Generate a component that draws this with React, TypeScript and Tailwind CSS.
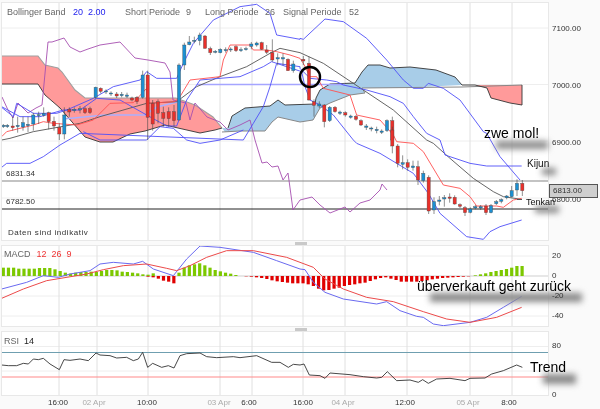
import React from "react";

type Candle = [number, number, number, number, number, "r" | "b"];

const UP = "#1b8fd2";
const DOWN = "#e8302b";

const font = "font-['Liberation_Sans',Arial,sans-serif]";

// all chart points were read off a 3x crop, so pts() scales them back
const pts = (raw: string, ox = 0, oy = 0) =>
  raw
    .trim()
    .split(/\s+/)
    .map((p) => {
      const [x, y] = p.split(",").map(Number);
      return `${x / 3 + ox},${y / 3 + oy}`;
    })
    .join(" ");

const grid = [59, 97, 148, 220, 252, 303, 345, 407, 470, 512];

const candlesLeft: Candle[] = [
  [10, 376, 380, 372, 384, "b"], [22, 376, 380, 372, 384, "b"], [38, 378, 383, 350, 392, "r"], [53, 376, 380, 350, 398, "b"],
  [69, 368, 381, 350, 392, "b"], [84, 373, 377, 350, 396, "b"], [100, 345, 372, 338, 392, "b"], [116, 344, 347, 335, 372, "b"],
  [131, 340, 346, 322, 350, "b"], [146, 338, 365, 335, 388, "r"], [162, 364, 378, 350, 392, "r"], [178, 382, 402, 370, 420, "r"],
  [193, 345, 402, 322, 418, "b"], [208, 328, 336, 322, 350, "r"], [223, 328, 332, 322, 338, "b"], [240, 326, 330, 318, 340, "b"],
  [255, 326, 338, 320, 342, "r"], [270, 326, 338, 320, 342, "r"], [287, 262, 292, 260, 296, "b"], [302, 265, 274, 262, 280, "r"],
  [318, 273, 276, 268, 282, "b"], [333, 279, 281, 274, 288, "b"], [350, 282, 288, 276, 294, "r"], [365, 283, 287, 276, 292, "b"],
  [381, 285, 289, 278, 294, "b"], [396, 294, 300, 290, 304, "r"], [411, 292, 305, 288, 312, "r"], [428, 225, 292, 212, 296, "b"],
  [443, 225, 352, 212, 420, "r"], [458, 310, 372, 300, 392, "r"], [474, 305, 340, 298, 370, "r"], [490, 338, 355, 320, 380, "r"],
  [506, 335, 356, 322, 380, "r"], [522, 335, 362, 315, 380, "r"], [537, 195, 360, 190, 362, "b"], [553, 135, 195, 128, 210, "b"],
  [568, 126, 134, 108, 136, "b"], [583, 121, 124, 110, 130, "b"], [599, 105, 122, 98, 136, "b"], [615, 108, 145, 105, 146, "r"],
  [631, 146, 158, 140, 165, "r"], [646, 154, 157, 150, 160, "b"], [661, 148, 158, 145, 160, "b"], [677, 149, 152, 142, 158, "b"],
  [692, 147, 150, 142, 156, "b"], [708, 140, 152, 136, 156, "r"], [723, 149, 152, 142, 156, "b"], [738, 146, 149, 140, 152, "b"],
  [754, 132, 139, 126, 148, "b"], [770, 129, 135, 125, 140, "b"], [785, 128, 148, 125, 150, "r"], [800, 150, 157, 135, 162, "r"],
  [817, 158, 180, 118, 185, "r"], [833, 173, 177, 160, 196, "b"], [849, 173, 177, 160, 196, "b"], [864, 178, 212, 175, 212, "r"],
  [880, 192, 212, 182, 218, "b"],
];

const candlesMid: Candle[] = [
  [10, 178, 183, 168, 195, "r"], [27, 190, 300, 170, 302, "r"], [42, 305, 316, 298, 350, "r"], [58, 312, 318, 304, 324, "b"],
  [73, 315, 365, 312, 382, "r"], [89, 322, 362, 318, 366, "b"], [105, 322, 335, 318, 338, "r"], [120, 336, 340, 332, 345, "b"],
  [136, 338, 345, 334, 350, "r"], [152, 348, 352, 344, 356, "b"], [168, 349, 358, 345, 362, "r"], [183, 362, 375, 358, 378, "r"],
  [199, 378, 382, 372, 390, "b"], [214, 384, 387, 380, 394, "b"], [230, 388, 392, 380, 400, "b"], [245, 393, 397, 388, 402, "b"],
  [261, 362, 392, 358, 396, "b"], [277, 362, 420, 350, 420, "r"],
];

const candlesRight: Candle[] = [
  [277, 0, 48, -10, 70, "r"], [293, 48, 100, 42, 112, "r"], [308, 98, 103, 76, 118, "b"], [323, 98, 112, 88, 122, "r"],
  [339, 108, 113, 92, 122, "b"], [354, 110, 150, 92, 165, "r"], [370, 130, 152, 122, 158, "b"], [386, 142, 243, 136, 252, "r"],
  [402, 215, 240, 202, 252, "b"], [418, 210, 214, 198, 226, "b"], [433, 203, 207, 195, 230, "b"], [449, 201, 205, 190, 218, "r"],
  [464, 202, 222, 196, 224, "r"], [480, 224, 229, 220, 234, "r"], [495, 233, 248, 228, 258, "r"], [511, 237, 247, 232, 250, "b"],
  [526, 230, 234, 225, 238, "b"], [542, 230, 234, 225, 240, "b"], [558, 228, 248, 222, 255, "r"], [573, 227, 248, 222, 250, "b"],
  [589, 215, 221, 210, 225, "b"], [604, 209, 214, 205, 220, "b"], [620, 198, 203, 195, 208, "b"], [635, 182, 200, 168, 202, "b"],
  [651, 160, 180, 148, 198, "b"], [667, 160, 182, 150, 198, "r"],
];

const green1 = [25, 25, 25, 22, 22, 22, 22, 24, 24, 24, 20, 15, 10, 7, 10, 12, 12, 13, 12, 15, 18, 18, 17, 13, 12, 10, 8, 5, 4, 8];
const red1 = [2, 4, 8, 14, 17, 22];
const green2 = [10, 25, 32, 35, 38, 32, 25, 18, 14, 10, 7, 3];
const red2 = [0, 1, 2, 4, 6, 9, 13, 16, 18, 20, 22, 22, 22, 25, 30, 38, 43, 42, 38, 35, 30, 27, 25, 22, 20, 15, 10, 6, 4, 8, 12, 17, 17, 17, 17, 15, 13, 10, 8, 6, 5, 4, 3, 2, 1];
const green3 = [2, 5, 8, 12, 15, 18, 21, 25, 30, 30];

function Candles({ data, ox, oy }: { data: Candle[]; ox: number; oy: number }) {
  return (
    <g>
      {data.map(([x, top, bot, wt, wb, c], i) => {
        const cx = x / 3 + ox;
        return (
          <g key={i}>
            <line x1={cx} x2={cx} y1={wt / 3 + oy} y2={wb / 3 + oy} stroke="#444" strokeWidth="0.6" />
            <rect
              x={cx - 1.6}
              y={top / 3 + oy}
              width="3.2"
              height={Math.max((bot - top) / 3, 1)}
              fill={c === "r" ? DOWN : UP}
              stroke="#444"
              strokeWidth="0.35"
            />
          </g>
        );
      })}
    </g>
  );
}

function GridLines({ y1, y2 }: { y1: number; y2: number }) {
  return (
    <g stroke="#e0e0e0" strokeWidth="1">
      {grid.map((x) => (
        <line key={x} x1={x} x2={x} y1={y1} y2={y2} />
      ))}
    </g>
  );
}

function MainChart() {
  const bbUpper = pts("5,322 40,350 50,310 100,340 170,340 200,330 280,295 340,260 420,240 440,215 470,235 530,235 550,190 580,130 640,60 720,20 770,13 810,40 830,105 900,118") + " " +
    pts("0,115 10,118 75,57 130,65 200,115 260,180 310,240 340,265 370,265 385,250 430,265 480,300 550,395", 300) + " " +
    pts("560,10 600,80 660,150", 300, 130);
  const bbMid = pts("5,320 60,350 120,350 190,330 240,330 290,295 360,300 440,345 500,378 530,378 560,300 600,240 660,235 720,230 790,200 815,185 830,190 900,200") + " " +
    pts("0,205 30,235 80,240 110,245 130,255 200,270 270,290 310,310 340,350 380,400", 300) + " " +
    pts("420,30 435,75 510,100 560,108 665,108", 300, 130);
  const bbLow = pts("5,112 20,100 90,100 130,80 180,45 240,10", 0, 130) + " " +
    pts("730,420 760,370 790,320 810,260 830,190", 0, 0) + " " +
    pts("5,215 15,260 30,300 60,315 100,345 160,420", 300, 0) + " " +
    pts("170,40 240,70 290,100 340,130 385,190 420,250 500,320 550,328 570,305 600,290 665,270", 300, 130);
  const bbLower2 = pts("250,395 300,420 440,420 480,380 520,385 560,420", 0, 0) + " " + pts("600,40 660,30 730,0", 0, 130);
  const kijun = pts("5,420 30,415 100,395 240,370 300,350 440,310 530,305 590,260 660,230 740,200 810,160 840,145 900,158") + " " +
    pts("0,158 70,190 160,250 280,330 380,420", 300) + " " +
    pts("400,40 450,85 520,145 580,185 610,200 665,208", 300, 130);
  const tenkan = pts("5,410 20,395 60,385 100,375 130,365 160,370 230,375 280,360 330,310 400,308 440,265 440,310 525,305 540,290 570,240 660,230 670,180 690,135 750,135 760,150 800,150 830,155 870,165 900,175") + " " +
    pts("10,190 30,230 50,230 70,265 150,285 170,345 240,360 280,405", 300) + " " +
    pts("290,35 340,40 370,65 430,165 480,175 510,200 530,228 590,228 610,232 640,210 665,205", 300, 130);
  const chikou = "2,97 8,110 13,118 18,103 28,113 36,108 42,105 48,42 52,42 64,38 70,47 80,52 88,49 100,45 120,42 135,58 148,60 165,63 170,72 173,100 186,103 190,120 195,103 207,117 220,122 228,130 240,125 250,120 255,140 262,163 267,162 272,167 278,166 283,180 288,173 293,210 300,200 312,197 320,205 330,213 345,207 350,212 360,203 370,200 380,190 382,184 387,190";

  return (
    <svg viewBox="2 3 546 237" className="block h-[237px] w-[546px]">
      <g stroke="#eeeeee" strokeWidth="1">
        <line x1="2" x2="548" y1="28" y2="28" />
        <line x1="2" x2="548" y1="84.5" y2="84.5" />
        <line x1="2" x2="548" y1="141" y2="141" />
        <line x1="2" x2="548" y1="198" y2="198" />
      </g>
      <GridLines y1={3} y2={240} />

      {/* cloud */}
      <polygon
        fill="#ff9a9a"
        points="2,56 38,56 45,65 58,68 62,72 75,90 85,98 176,98 195,105 213,117 222,128 215,130 200,133 178,128 165,125 145,131 130,134 113,142 100,142 85,137 60,108 45,95 38,84 2,84"
      />
      <polygon
        fill="#a8cde8"
        points="222,128 228,128 232,116 245,108 270,106 278,100 285,105 315,104 316,98 320,90 330,84 355,83 362,72 368,65 380,65 390,68 410,67 436,70 455,77 462,85 400,88 362,88 365,93 350,95 330,103 320,108 313,120 300,122 278,117 272,122 265,131 240,131 225,132"
      />
      <polygon fill="#ff9a9a" points="462,85 522,85 522,105 510,103 491,98 487,88 475,85" />
      <polyline fill="none" stroke="#a0a0a0" strokeWidth="1.1" points="2,56 38,56 45,65 58,68 62,72 75,90 85,98 176,98 195,105 213,117 222,128" />
      <polyline fill="none" stroke="#333" strokeWidth="0.9" points="2,84 38,84 45,95 60,108 85,137 100,142 113,142 130,134 145,131 165,125 178,128 200,133 215,130 222,128" />
      <polyline fill="none" stroke="#888" strokeWidth="1" points="222,132 240,131 265,131 272,122 278,117 300,122 313,120 320,108 330,103 350,95 365,93 362,88 462,87 522,85" />
      <polyline fill="none" stroke="#333" strokeWidth="0.9" points="228,128 232,116 245,108 270,106 278,100 285,105 315,104 316,98 320,90 330,84 355,83 362,72 368,65 380,65 390,68 410,67 436,70 455,77 462,85 475,85 487,88 491,98 510,103 522,105 522,85" />

      <polyline fill="none" stroke="#aab0ff" strokeWidth="1.6" points="63,119 105,115 145,115 157,107 177,102" />
      <line x1="197" x2="345" y1="84.5" y2="84.5" stroke="#a5a5ff" strokeWidth="1.4" />

      <line x1="2" x2="548" y1="181" y2="181" stroke="#888" strokeWidth="1.2" />
      <line x1="2" x2="548" y1="209" y2="209" stroke="#222" strokeWidth="1" />

      <polyline fill="none" stroke="#a64fb0" strokeWidth="0.9" points={chikou} />
      <polyline fill="none" stroke="#555" strokeWidth="0.9" points={kijun} />
      <polyline fill="none" stroke="#4f4ff8" strokeWidth="0.9" points={bbUpper} />
      <polyline fill="none" stroke="#4f4ff8" strokeWidth="0.9" points={bbMid} />
      <polyline fill="none" stroke="#4f4ff8" strokeWidth="0.9" points={bbLow} />
      <polyline fill="none" stroke="#4f4ff8" strokeWidth="0.9" points={bbLower2} />
      <polyline fill="none" stroke="#ff5050" strokeWidth="0.9" points={tenkan} />

      <Candles data={candlesLeft} ox={0} oy={0} />
      <Candles data={candlesMid} ox={300} oy={0} />
      <Candles data={candlesRight} ox={300} oy={130} />

      <circle cx="310" cy="77" r="10" fill="none" stroke="#000" strokeWidth="2.4" />
      {/* small stub beside the Tenkan label */}
      <line x1="517" x2="522" y1="199.5" y2="199.5" stroke="#555" strokeWidth="1" />
    </svg>
  );
}

function MacdChart() {
  const bars: { x: number; h: number; c: string }[] = [];
  green1.forEach((h, i) => bars.push({ x: 3.3 + i * 5.17, h: h / 3, c: "#7cc800" }));
  red1.forEach((h, i) => bars.push({ x: 148 + i * 5.17, h: -h / 3, c: "#e00000" }));
  green2.forEach((h, i) => bars.push({ x: 179 + i * 5.17, h: h / 3, c: "#7cc800" }));
  red2.forEach((h, i) => bars.push({ x: 241 + i * 5.17, h: -h / 3, c: "#e00000" }));
  green3.forEach((h, i) => bars.push({ x: 475.3 + i * 5.2, h: h / 3, c: "#7cc800" }));

  const blue = pts("5,90 80,70 130,50 175,55 210,45 270,35 300,15 340,10 400,15 428,7 460,30 520,50 560,0 600,-39 660,-35 760,-20 830,5 900,30", 0, 260) + " " +
    pts("15,32 40,70 75,100 130,120 230,135 260,128 300,155 350,172 370,175 400,195 430,200 510,190 560,175 610,145 665,112", 300, 260);
  const red = pts("5,118 70,90 140,65 260,45 310,32 370,20 440,15 500,28 530,35 570,20 620,-5 680,-25 760,-25 860,-5 900,10", 0, 260) + " " +
    pts("40,25 75,60 130,90 200,115 280,128 370,158 440,180 510,190 590,175 665,145", 300, 260);

  return (
    <svg viewBox="2 247 546 80" className="block h-[80px] w-[546px]">
      <g stroke="#eeeeee" strokeWidth="1">
        <line x1="2" x2="548" y1="257" y2="257" />
        <line x1="2" x2="548" y1="297" y2="297" />
        <line x1="2" x2="548" y1="317" y2="317" />
      </g>
      <GridLines y1={247} y2={327} />
      <line x1="2" x2="548" y1="277" y2="277" stroke="#cfcfcf" strokeWidth="1" />
      {bars.map((b, i) => (
        <rect key={i} x={b.x - 1.6} y={b.h > 0 ? 277 - b.h : 277} width="3.2" height={Math.abs(b.h)} fill={b.c} />
      ))}
      <polyline fill="none" stroke="#6a6af0" strokeWidth="1" points={blue} />
      <polyline fill="none" stroke="#ec4a4a" strokeWidth="1" points={red} />
    </svg>
  );
}

function RsiChart() {
  const rsi = pts("5,318 25,320 50,320 70,313 85,315 100,300 115,302 130,298 150,315 178,332 192,302 210,304 240,300 265,305 288,282 300,288 330,290 350,297 380,295 400,305 415,300 428,280 443,325 458,313 485,325 505,320 522,327 540,290 560,284 600,282 620,293 650,296 700,293 720,296 770,290 815,310 840,310 865,325 880,316 900,318", 0, 260) + " " +
    pts("12,315 28,348 60,350 75,358 90,342 150,347 190,353 230,357 245,355 262,338 290,365 330,363 355,370 368,362 385,373 410,360 450,358 495,365 510,358 555,357 575,345 610,335 650,318 667,325", 300, 260);
  return (
    <svg viewBox="2 333 546 63" className="block h-[63px] w-[546px]">
      <g stroke="#eeeeee" strokeWidth="1">
        <line x1="2" x2="548" y1="347.5" y2="347.5" />
        <line x1="2" x2="548" y1="372" y2="372" />
      </g>
      <GridLines y1={333} y2={396} />
      <line x1="2" x2="548" y1="353.5" y2="353.5" stroke="#6f9fb0" strokeWidth="1" />
      <line x1="2" x2="548" y1="378" y2="378" stroke="#ff8a8a" strokeWidth="1.2" />
      <polyline fill="none" stroke="#333" strokeWidth="0.9" points={rsi} />
    </svg>
  );
}

function Handle() {
  return (
    <div className="flex h-[6px] w-[546px] items-center pl-[293px]">
      <div className="h-[3px] w-[12px] bg-[#c9c9c9]" />
    </div>
  );
}

function Smudge({ className }: { className: string }) {
  return <div className={`absolute bg-[#8a8a8a] blur-[3px] ${className}`} />;
}

export default function App() {
  return (
    <div className={`relative h-[409px] w-[600px] overflow-hidden bg-[#fafafa] ${font} text-[9px] text-[#333] blur-[0.35px]`}>
      <div className="flex flex-col pl-[2px] pt-[3px]">
        <div className="flex">
          <div className="relative bg-white ring-1 ring-[#e8e8e8]">
            <MainChart />
            <div className="absolute left-[5px] top-[4px] flex text-[9px] leading-[11px] text-[#666]">
              <span className="w-[66px]">Bollinger Band</span>
              <span className="w-[15px] text-[#2222ee]">20</span>
              <span className="w-[37px] text-[#2222ee]">2.00</span>
              <span className="w-[61px]">Short Periode</span>
              <span className="w-[19px]">9</span>
              <span className="w-[60px]">Long Periode</span>
              <span className="w-[18px]">26</span>
              <span className="w-[66px]">Signal Periode</span>
              <span>52</span>
            </div>
            <span className="absolute left-[4px] top-[166px] text-[8px] leading-[10px]">6831.34</span>
            <span className="absolute left-[4px] top-[194px] text-[8px] leading-[10px]">6782.50</span>
            <span className="absolute left-[6px] top-[225px] text-[8px] leading-[10px] tracking-[0.55px]">Daten sind indikativ</span>
          </div>
          <div className="relative z-10 flex w-[52px] flex-col gap-[47px] pl-[4px] pt-[21px] text-[8px] leading-[10px]">
            <span>7100.00</span>
            <span>7000.00</span>
            <span>6900.00</span>
            <span>6800.00</span>
            <div className="absolute left-[1px] top-[181px] flex h-[14px] w-[49px] items-center border border-[#555] bg-[#cfcfcf] pl-[3px]">
              6813.00
            </div>
          </div>
        </div>
        <Handle />
        <div className="flex">
          <div className="relative bg-white ring-1 ring-[#e8e8e8]">
            <MacdChart />
            <div className="absolute left-[2px] top-[3px] flex gap-[5px] text-[9px] leading-[11px] text-[#666]">
              <span className="mr-[1px]">MACD</span>
              <span className="text-[#ee3333]">12</span>
              <span className="text-[#ee3333]">26</span>
              <span className="text-[#ee3333]">9</span>
            </div>
          </div>
          <div className="relative z-10 flex h-[80px] w-[52px] flex-col gap-[10px] pl-[4px] pt-[5px] text-[8px] leading-[10px]">
            <span>20</span>
            <span>0</span>
            <span>-20</span>
            <span>-40</span>
          </div>
        </div>
        <Handle />
        <div className="flex">
          <div className="relative bg-white ring-1 ring-[#e8e8e8]">
            <RsiChart />
            <div className="absolute left-[2px] top-[4px] flex gap-[5px] text-[9px] leading-[11px] text-[#666]">
              <span>RSI</span>
              <span className="text-[#222]">14</span>
            </div>
          </div>
          <div className="flex h-[63px] w-[52px] flex-col gap-[39px] pl-[4px] pt-[9px] text-[8px] leading-[10px]">
            <span className="shrink-0">80</span>
            <span className="shrink-0">0</span>
          </div>
        </div>
        <div className="flex h-[12px] w-[546px] pl-[41px] pt-[3px] text-center text-[8px] leading-[10px]">
          <span className="w-[30px]">16:00</span>
          <span className="ml-[6px] w-[30px] text-[#aaa]">02 Apr</span>
          <span className="ml-[23px] w-[30px]">10:00</span>
          <span className="ml-[42px] w-[30px] text-[#aaa]">03 Apr</span>
          <span className="w-[30px]">6:00</span>
          <span className="ml-[24px] w-[30px]">16:00</span>
          <span className="ml-[10px] w-[30px] text-[#aaa]">04 Apr</span>
          <span className="ml-[32px] w-[30px]">12:00</span>
          <span className="ml-[33px] w-[30px] text-[#aaa]">05 Apr</span>
          <span className="ml-[11px] w-[30px]">8:00</span>
        </div>
      </div>

      {/* hand-written annotations on top of the chart, with the smudged-out text behind them */}
      <Smudge className="left-[496px] top-[141px] h-[8px] w-[52px]" />
      <Smudge className="left-[542px] top-[168px] h-[7px] w-[14px]" />
      <Smudge className="left-[535px] top-[206px] h-[7px] w-[24px]" />
      <Smudge className="left-[430px] top-[293px] h-[9px] w-[152px]" />
      <Smudge className="left-[543px] top-[374px] h-[10px] w-[33px]" />
      <span className="absolute left-[484px] top-[125px] z-20 text-[14px] leading-[16px] text-black">zwe mol!</span>
      <span className="absolute left-[527px] top-[158px] z-20 text-[10px] leading-[12px] text-[#111]">Kijun</span>
      <span className="absolute left-[526px] top-[197px] z-20 text-[9px] leading-[11px] text-[#111]">Tenkan</span>
      <span className="absolute left-[417px] top-[278px] z-20 text-[14px] leading-[16px] text-black">überverkauft geht zurück</span>
      <span className="absolute left-[530px] top-[359px] z-20 text-[14px] leading-[16px] text-black">Trend</span>
    </div>
  );
}
